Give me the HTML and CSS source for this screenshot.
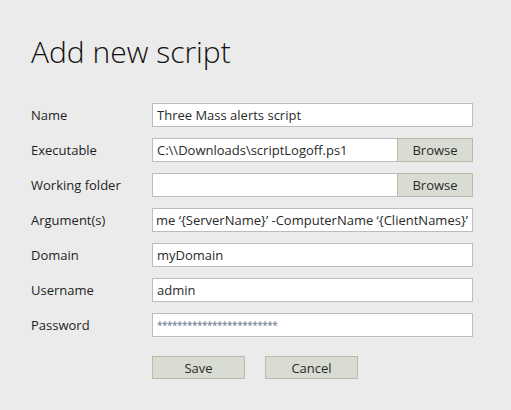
FILE: index.html
```html
<!DOCTYPE html>
<html lang="en">
<head>
    <meta charset="UTF-8">
    <meta name="viewport" content="width=device-width, initial-scale=1.0">
    <title>Add new script</title>
    <link rel="stylesheet" href="styles.css">
</head>
<body>
    <div class="page">
        <h1 class="title">Add new script</h1>

        <div class="form">
            <label class="label">Name</label>
            <input class="field" type="text" value="Three Mass alerts script">

            <label class="label">Executable</label>
            <div class="file-row">
                <input class="field" type="text" value="C:\\Downloads\scriptLogoff.ps1">
                <button class="browse">Browse</button>
            </div>

            <label class="label">Working folder</label>
            <div class="file-row">
                <input class="field" type="text" value="">
                <button class="browse">Browse</button>
            </div>

            <label class="label">Argument(s)</label>
            <input class="field" type="text" id="args" value="-ServerName ‘{ServerName}’ -ComputerName ‘{ClientNames}’">

            <label class="label">Domain</label>
            <input class="field" type="text" value="myDomain">

            <label class="label">Username</label>
            <input class="field" type="text" value="admin">

            <label class="label">Password</label>
            <input class="field password" type="text" value="************************">

            <div></div>
            <div class="actions">
                <button class="button">Save</button>
                <button class="button">Cancel</button>
            </div>
        </div>
    </div>
    <script>
        // show the tail of the argument line, as the field does after typing
        const args = document.getElementById('args');
        args.scrollLeft = args.scrollWidth;
    </script>
</body>
</html>
```

FILE: styles.css
```css
body {
    margin: 0;
    background: #ebebeb;
    font-family: 'Open Sans', 'Noto Sans', sans-serif;
    color: #1e1e1e;
}
.page {
    padding: 30px 0 0 31px;
}
.title {
    margin: 0 0 29px 0;
    font-size: 30px;
    font-weight: 300;
    line-height: 44px;
    color: #111;
}
.form {
    display: grid;
    grid-template-columns: 121px 321px;
    row-gap: 11px;
    align-items: center;
    font-size: 13px;
}
.label {
    line-height: 24px;
}
.field {
    box-sizing: border-box;
    width: 100%;
    height: 24px;
    margin: 0;
    padding: 0 4px;
    border: 1px solid #bcbcbc;
    background: #fff;
    font-family: inherit;
    font-size: 13px;
    color: #2a2a2a;
    outline: none;
}
.password {
    font-size: 10px;
    color: #5f6f88;
    letter-spacing: -0.5px;
}
.file-row {
    display: flex;
}
.file-row .field {
    flex: 1;
    border-right: none;
}
.browse,
.button {
    box-sizing: border-box;
    height: 24px;
    margin: 0;
    padding: 0;
    background: #d9dcd3;
    border: 1px solid #b8bda9;
    font-family: inherit;
    font-size: 13px;
    color: #2a2a2a;
}
.browse {
    width: 76px;
}
.actions {
    display: flex;
    gap: 20px;
    margin-top: 8px;
}
.button {
    width: 93px;
    height: 23px;
}
```
